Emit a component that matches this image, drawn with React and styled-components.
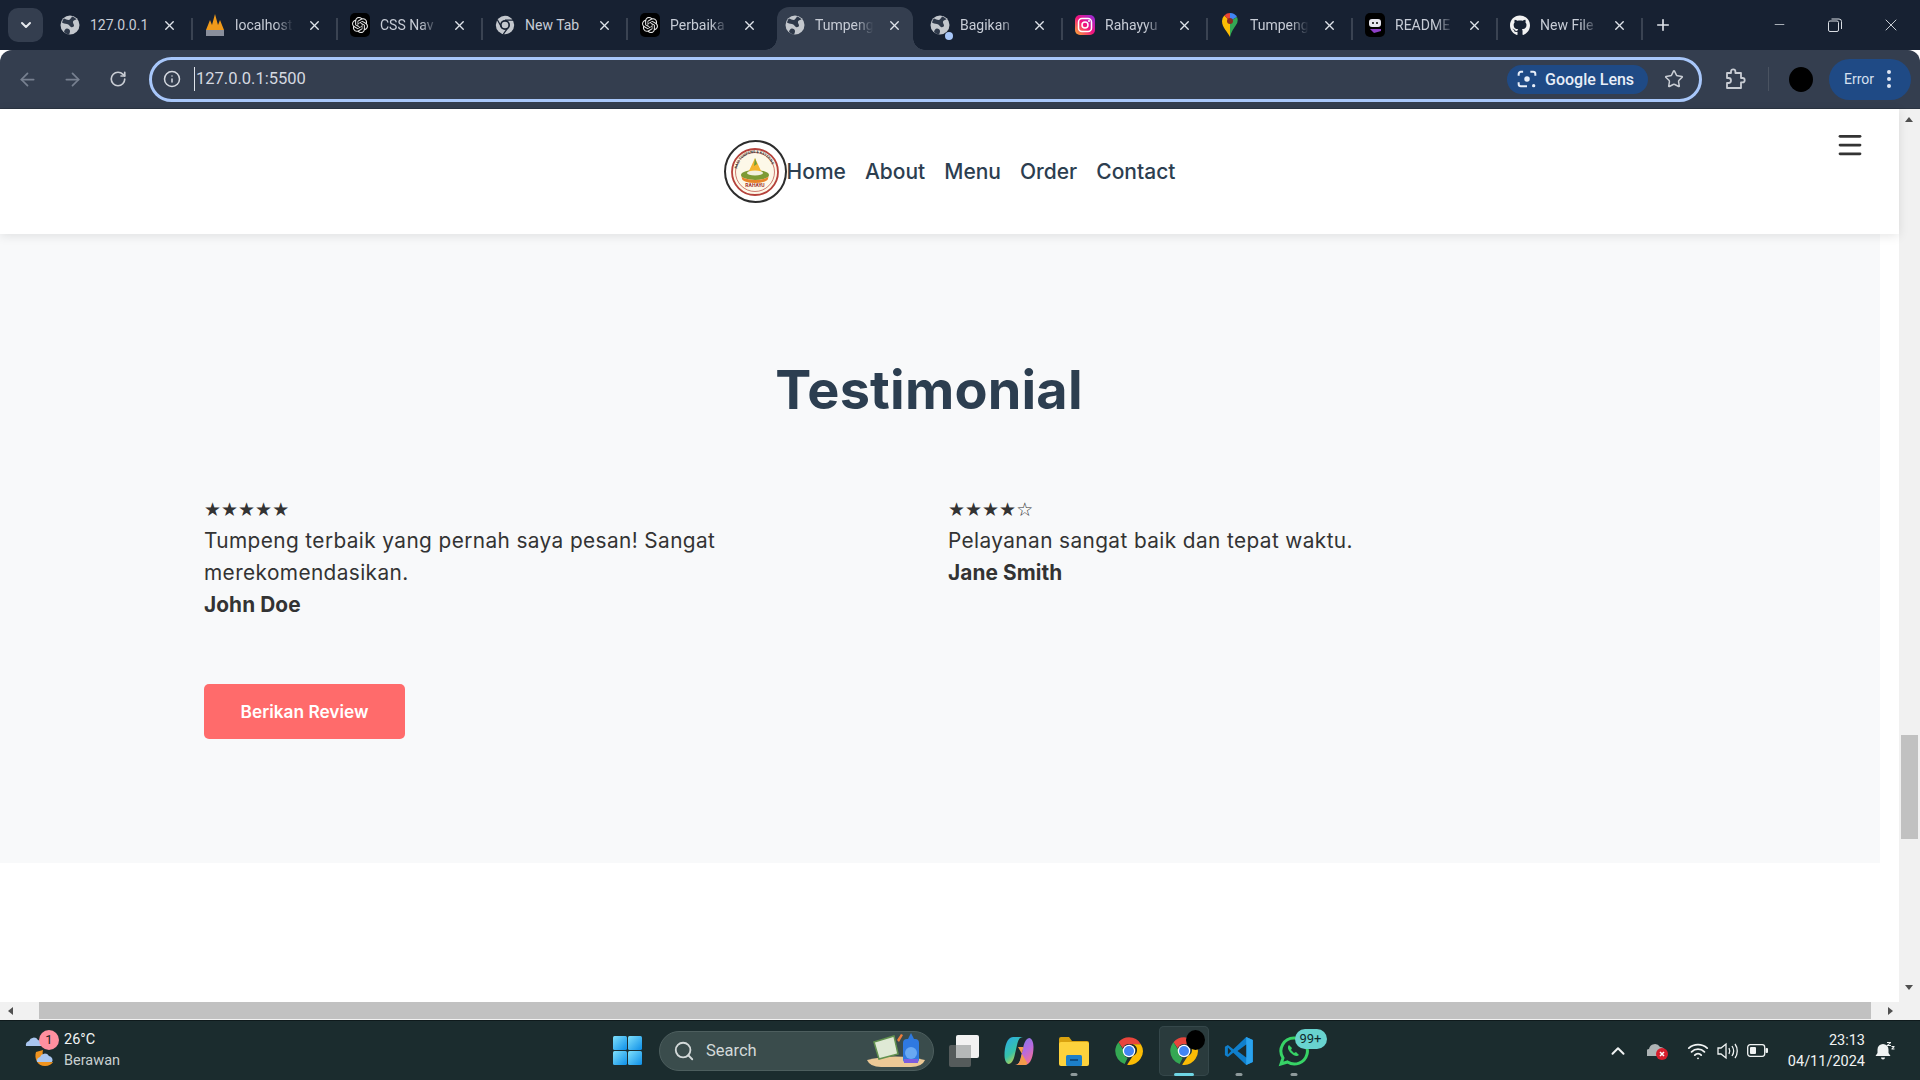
import styled, { createGlobalStyle } from "styled-components"
import { ArrowLeft, ArrowRight, RotateCw, Info, Star, Plus, X, ChevronDown, ChevronUp, Search, Wifi, Minus, Menu } from "lucide-react"
import { FaGithub } from "react-icons/fa"
import { SiOpenai } from "react-icons/si"

const GlobalStyle = createGlobalStyle`
  html, body { margin: 0; padding: 0; overflow: hidden; }
  body { font-family: "Inter", "Liberation Sans", sans-serif; }
  * { box-sizing: border-box; }
`

const Screen = styled.div`
  width: 1920px;
  height: 1080px;
  display: flex;
  flex-direction: column;
  background: #fff;
  overflow: hidden;
`

/* browser tabs */
const TabStrip = styled.div`
  height: 50px;
  background: #172132;
  display: flex;
  align-items: flex-end;
  padding-left: 8px;
  flex-shrink: 0;
`
const TabListButton = styled.div`
  width: 35px;
  height: 34px;
  margin: 0 4px 8px 0;
  border-radius: 10px;
  background: #343e4f;
  color: #e6e9ee;
  display: flex;
  align-items: center;
  justify-content: center;
`
const Tab = styled.div`
  position: relative;
  width: 145px;
  height: 43px;
  padding: 0 0 7px 13px;
  display: flex;
  align-items: center;
  flex-shrink: 0;
`
const ActiveShape = styled.div`
  position: absolute;
  left: 5px;
  right: 4px;
  top: 0;
  bottom: 0;
  background: #343e4f;
  border-radius: 12px 12px 0 0;
`
const Flare = styled.div`
  position: absolute;
  bottom: 0;
  width: 12px;
  height: 12px;
  ${p => (p.$side === "left" ? "left: -7px;" : "right: -8px;")}
  background: radial-gradient(circle at ${p => (p.$side === "left" ? "0 0" : "100% 0")}, transparent 11.5px, #343e4f 12px);
`
const TabIcon = styled.div`
  position: relative;
  width: 20px;
  height: 20px;
  flex-shrink: 0;
  display: flex;
  align-items: center;
  justify-content: center;
`
const TabDot = styled.div`
  position: absolute;
  right: -3px;
  bottom: -5px;
  width: 8px;
  height: 8px;
  border-radius: 50%;
  background: #a8c7fa;
`
const TabTitle = styled.div`
  position: relative;
  width: 65px;
  margin-left: 10px;
  font-family: "Roboto", sans-serif;
  font-size: 14px;
  color: #c7ccd6;
  white-space: nowrap;
  ${p => p.$fade && `
    -webkit-mask-image: linear-gradient(to right, #000 62%, transparent 90%);
    mask-image: linear-gradient(to right, #000 62%, transparent 90%);
  `}
`
const TabClose = styled.div`
  position: relative;
  margin-left: 7px;
  color: #dfe3ea;
  display: flex;
`
const TabSep = styled.div`
  position: absolute;
  right: -1px;
  top: 11px;
  width: 2px;
  height: 22px;
  background: #3a4352;
`
const NewTab = styled.div`
  width: 30px;
  margin: 0 0 7px 12px;
  height: 36px;
  color: #dfe3ea;
  display: flex;
  align-items: center;
`
const WindowControls = styled.div`
  margin-left: auto;
  height: 50px;
  display: flex;
  align-items: center;
  color: #d9dde3;
`
const WindowButton = styled.div`
  width: ${p => p.$w || 55}px;
  display: flex;
  justify-content: center;
  margin-bottom: 1px;
`

/* address bar */
const Toolbar = styled.div`
  height: 59px;
  background: #343e4f;
  border-radius: 12px 12px 0 0;
  display: flex;
  align-items: center;
  padding: 0 8px 0 0;
  flex-shrink: 0;
  border-bottom: 1px solid #2b3442;
`
const NavIcon = styled.div`
  width: 45px;
  display: flex;
  justify-content: center;
  color: ${p => (p.$dim ? "#778090" : "#c9cdd4")};
  &:first-child { margin-left: 5px; }
`
const AddressBar = styled.div`
  width: 1553px;
  height: 45px;
  margin-left: 9px;
  border: 3px solid #a8c7fa;
  border-radius: 23px;
  display: flex;
  align-items: center;
  padding-left: 11px;
  color: #d5d9e0;
`
const UrlText = styled.div`
  margin-left: 13px;
  padding-left: 1px;
  border-left: 1px solid #dfe3ea;
  font-family: "Roboto", sans-serif;
  font-size: 16.5px;
  line-height: 24px;
  color: #d5d9e0;
`
const LensPill = styled.div`
  margin-left: auto;
  width: 141px;
  height: 29px;
  border-radius: 15px;
  background: #1f4a85;
  display: flex;
  align-items: center;
  padding-left: 10px;
  gap: 8px;
  font-family: "Roboto", sans-serif;
  font-weight: 500;
  font-size: 16px;
  color: #e8eef8;
`
const StarButton = styled.div`
  width: 52px;
  margin-right: -1px;
  display: flex;
  justify-content: center;
  color: #c9cdd4;
`
const ExtensionButton = styled.div`
  margin-left: 20px;
  width: 26px;
  display: flex;
  justify-content: center;
  color: #c9cdd4;
`
const ToolbarDivider = styled.div`
  width: 1px;
  height: 24px;
  margin-left: 20px;
  background: #4a5361;
`
const Avatar = styled.div`
  width: 24px;
  height: 25px;
  margin-left: 20px;
  border-radius: 50%;
  background: #000;
`
const ErrorPill = styled.div`
  width: 82px;
  height: 41px;
  margin-left: 16px;
  border-radius: 21px;
  background: #1f4a85;
  display: flex;
  align-items: center;
  padding-left: 15px;
  font-family: "Roboto", sans-serif;
  font-size: 14px;
  color: #d6e0f0;
`
const Kebab = styled.div`
  margin-left: 13px;
  display: flex;
  flex-direction: column;
  gap: 3px;
  & > i {
    display: block;
    width: 4px;
    height: 4px;
    border-radius: 50%;
    background: #dfe6f2;
  }
`

/* page area */
const Viewport = styled.div`
  flex: 1;
  min-height: 0;
  display: flex;
`
const Page = styled.div`
  flex: 1;
  min-width: 0;
  background: #fff;
`
const NavBar = styled.nav`
  position: relative;
  z-index: 1;
  height: 125px;
  background: #fff;
  box-shadow: 0 2px 10px rgba(0, 0, 0, 0.1);
  display: flex;
  align-items: center;
  justify-content: center;
`
const LogoRing = styled.div`
  width: 63px;
  height: 63px;
  border-radius: 50%;
  border: 2px solid #2d2d2d;
  display: flex;
  align-items: center;
  justify-content: center;
`
const NavLinks = styled.div`
  display: flex;
  gap: 19px;
`
const NavLink = styled.a`
  font-size: 21px;
  font-weight: 500;
  color: #2c3e50;
`
const Hamburger = styled.div`
  position: absolute;
  right: 34px;
  top: 21px;
  color: #333;
  display: flex;
`
const Section = styled.section`
  width: 1880px;
  height: 629px;
  background: #f8f9fa;
  padding: 116px 0 0 204px;
`
const Container = styled.div`
  width: 1450px;
`
const Title = styled.h2`
  margin: 0;
  text-align: center;
  font-size: 54px;
  line-height: 80px;
  font-weight: 700;
  letter-spacing: 0.2px;
  color: #2c3e50;
`
const ReviewGrid = styled.div`
  margin-top: 63px;
  display: grid;
  grid-template-columns: 706px 706px;
  gap: 38px;
`
const Review = styled.div`
  font-size: 20.8px;
  line-height: 32px;
  color: #333;
`
const Stars = styled.div`
  font-family: "DejaVu Sans", sans-serif;
  font-size: 19px;
  line-height: 32px;
  height: 32px;
`
const Quote = styled.p`
  margin: 0;
  max-width: 560px;
  letter-spacing: 0.4px;
`
const Author = styled.div`
  font-weight: 700;
  letter-spacing: 0.1px;
`
const ReviewButton = styled.button`
  display: block;
  margin-top: 63px;
  width: 201px;
  height: 55px;
  border: none;
  border-radius: 5px;
  background: #ff6b6b;
  color: #fff;
  font-family: inherit;
  font-size: 17.3px;
  font-weight: 600;
`

/* scrollbars */
const VScroll = styled.div`
  position: relative;
  width: 21px;
  background: #f1f1f1;
  flex-shrink: 0;
`
const VThumb = styled.div`
  position: absolute;
  top: 626px;
  left: 2px;
  width: 17px;
  height: 104px;
  background: #c1c1c1;
`
const Arrow = styled.div`
  position: absolute;
  width: 0;
  height: 0;
  border-style: solid;
  ${p => p.$dir === "up" && "top: 8px; left: 6px; border-width: 0 4.5px 5px; border-color: transparent transparent #505050;"}
  ${p => p.$dir === "down" && "bottom: 12px; left: 6px; border-width: 5px 4.5px 0; border-color: #505050 transparent transparent;"}
  ${p => p.$dir === "left" && "left: 8px; top: 5px; border-width: 4.5px 5px 4.5px 0; border-color: transparent #505050 transparent transparent;"}
  ${p => p.$dir === "right" && "right: 27px; top: 5px; border-width: 4.5px 0 4.5px 5px; border-color: transparent transparent transparent #505050;"}
`
const HScroll = styled.div`
  position: relative;
  height: 18px;
  background: #f1f1f1;
  flex-shrink: 0;
`
const HThumb = styled.div`
  position: absolute;
  left: 39px;
  top: 0;
  width: 1832px;
  height: 17px;
  background: #c1c1c1;
`

/* taskbar */
const Taskbar = styled.div`
  position: relative;
  height: 60px;
  background: #1b2c2e;
  flex-shrink: 0;
  display: flex;
  align-items: center;
  border-top: 1px solid #0f1a1c;
`
const Weather = styled.div`
  position: absolute;
  left: 24px;
  top: 7px;
  display: flex;
  gap: 7px;
`
const WeatherIcon = styled.div`
  position: relative;
  width: 33px;
  height: 44px;
`
const WeatherBadge = styled.div`
  position: absolute;
  left: 15px;
  top: 2px;
  width: 20px;
  height: 20px;
  border-radius: 50%;
  background: #ff8f9f;
  color: #222;
  font-family: "Roboto", sans-serif;
  font-size: 13px;
  line-height: 20px;
  text-align: center;
`
const WeatherText = styled.div`
  font-family: "Roboto", sans-serif;
  font-size: 14.5px;
  line-height: 21px;
  color: #f2f4f4;
  padding-top: 1px;
  & > div + div { color: #c9d0d0; }
`
const TaskCenter = styled.div`
  position: absolute;
  left: 613px;
  top: 0;
  height: 59px;
  display: flex;
  align-items: center;
`
const SearchPill = styled.div`
  position: relative;
  width: 275px;
  height: 40px;
  margin: 0 2px 0 17px;
  border-radius: 20px;
  background: #3a4c4c;
  border: 1px solid #4d5e5e;
  display: flex;
  align-items: center;
  padding-left: 13px;
  gap: 11px;
  font-family: "Roboto", sans-serif;
  font-size: 16.5px;
  color: #d3d9d9;
`
const SearchArt = styled.div`
  position: absolute;
  right: 6px;
  bottom: 2px;
  display: flex;
`
const TaskItem = styled.div`
  position: relative;
  width: 50px;
  height: 50px;
  margin: 0 2.5px;
  border-radius: 5px;
  display: flex;
  align-items: center;
  justify-content: center;
  ${p => p.$active && "background: #2a3b3d; box-shadow: inset 0 0 0 1px #35474a;"}
`
const RunDot = styled.div`
  position: absolute;
  bottom: 0;
  left: 50%;
  transform: translateX(-50%);
  height: 3px;
  border-radius: 2px;
  width: ${p => (p.$active ? "20px" : "7px")};
  background: ${p => (p.$active ? "#6fd6e4" : "#8e9a9b")};
`
const CountBadge = styled.div`
  position: absolute;
  right: -8px;
  top: 3px;
  width: 32px;
  height: 20px;
  border-radius: 10px;
  background: #68d3cf;
  color: #10282a;
  font-family: "Roboto", sans-serif;
  font-size: 13px;
  line-height: 20px;
  text-align: center;
`
const BlackSpot = styled.div`
  position: absolute;
  right: 4px;
  top: 4px;
  width: 19px;
  height: 20px;
  border-radius: 50%;
  background: #000;
`
const Tray = styled.div`
  position: absolute;
  right: 15px;
  top: 0;
  height: 59px;
  display: flex;
  align-items: center;
  color: #f0f3f3;
`
const TrayIcon = styled.div`
  width: ${p => p.$w || 30}px;
  display: flex;
  justify-content: center;
`
const Clock = styled.div`
  margin-left: 15px;
  text-align: right;
  font-family: "Roboto", sans-serif;
  font-size: 14.5px;
  line-height: 21px;
  color: #f0f3f3;
`

const Globe = ({ size = 20 }) => (
  <svg width={size} height={size} viewBox="0 0 20 20">
    <circle cx="10" cy="10" r="9.5" fill="#c3c7cd" />
    <path d="M4 3.5c2 .5 3 1.5 4.5 1.5S11 3 12 1.5c2 .5 3.5 1.5 4.5 3-1.5.5-3 .8-3.5 2s1 2.500 1 4-2 2-3 1.500-2-2.500-4-3-4-.5-5-1.500C2.500 6 3 4.500 4 3.500zM7 13.500c1.500 0 3 1 3 2.500s-.5 3-1.500 3.500C6.500 19 5 18 4 16.500c.5-1.500 1.500-3 3-3z" fill="#2e3849" />
  </svg>
)
const PeakIcon = () => (
  <svg width="20" height="24" viewBox="0 0 20 24">
    <path d="M1 17 5 7l2 5 3-11 3 11 2-5 4 10z" fill="#f09a1a" />
    <rect x="1" y="17" width="18" height="6" fill="#8a8f9c" />
  </svg>
)
const DarkTile = ({ children }) => (
  <svg width="20" height="24" viewBox="0 0 20 24">
    <rect width="20" height="24" rx="5" fill="#000" />
    {children}
  </svg>
)
const OpenAiIcon = () => (
  <div style={{ position: "relative", width: 20, height: 24 }}>
    <DarkTile />
    <SiOpenai size={16} color="#e8e8e8" style={{ position: "absolute", left: 2, top: 4 }} />
  </div>
)
const ChromeIcon = ({ size = 20 }) => (
  <svg width={size} height={size} viewBox="0 0 24 24">
    <path d="M12 1a11 11 0 0 1 9.500 5.500H12a5.500 5.500 0 0 0-5 3.200L3.600 4.900A11 11 0 0 1 12 1z" fill="#e8453c" />
    <path d="M1 12a11 11 0 0 1 2.600-7.100L8 12a4 4 0 0 0 3 5.400L8.500 22.400A11 11 0 0 1 1 12z" fill="#34a853" />
    <path d="M21.500 6.500A11 11 0 0 1 10.500 23l4.500-7a5 5 0 0 0 0-9.500z" fill="#fbbc05" />
    <circle cx="12" cy="12" r="5" fill="#fff" />
    <circle cx="12" cy="12" r="4" fill="#4285f4" />
  </svg>
)
const MonoChrome = () => (
  <svg width="20" height="20" viewBox="0 0 24 24">
    <circle cx="12" cy="12" r="11" fill="#c3c7cd" />
    <circle cx="12" cy="12" r="6" fill="#172132" />
    <circle cx="12" cy="12" r="4" fill="#c3c7cd" />
    <path d="M12 6h10M8 15 3 6M15 16l-5 7" stroke="#172132" strokeWidth="1.500" />
  </svg>
)
const InstagramIcon = () => (
  <svg width="20" height="24" viewBox="0 0 20 24">
    <defs>
      <linearGradient id="igGrad" x1="0" y1="1" x2="1" y2="0">
        <stop offset="0" stopColor="#fdb130" />
        <stop offset=".5" stopColor="#f0127e" />
        <stop offset="1" stopColor="#8d2fe0" />
      </linearGradient>
    </defs>
    <rect y="2" width="20" height="20" rx="5" fill="url(#igGrad)" />
    <rect x="3.500" y="5.500" width="13" height="13" rx="3.500" fill="none" stroke="#fff" strokeWidth="1.500" />
    <circle cx="10" cy="12" r="3" fill="none" stroke="#fff" strokeWidth="1.500" />
    <circle cx="14" cy="8" r="1" fill="#fff" />
  </svg>
)
const MapsIcon = () => (
  <svg width="16" height="24" viewBox="0 0 16 24">
    <path d="M8 24C6 19 0 15 0 8a8 8 0 0 1 2.300-5.600L8 8z" fill="#fbbc05" />
    <path d="M2.300 2.400A8 8 0 0 1 8 0v8z" fill="#ea4335" />
    <path d="M8 0a8 8 0 0 1 7 4l-7 4z" fill="#4285f4" />
    <path d="M15 4a8 8 0 0 1-1 8c-2 3-5 7-6 12V8z" fill="#34a853" />
    <circle cx="8" cy="8" r="3" fill="#8d2c20" />
  </svg>
)
const ReadmeIcon = () => (
  <DarkTile>
    <rect x="4" y="6" width="12" height="8" rx="3" fill="#e6e6ee" />
    <circle cx="8" cy="10" r="1" fill="#000" />
    <circle cx="12" cy="10" r="1" fill="#000" />
    <path d="M5 16h11v2l-7 2z" fill="#8e3fc9" />
  </DarkTile>
)
const LensIcon = () => (
  <svg width="20" height="20" viewBox="0 0 18 18" fill="none" stroke="#e8eef8" strokeWidth="1.800">
    <path d="M1.500 6V4.500a2 2 0 0 1 2-2h2M12 2.500h2.500a2 2 0 0 1 2 2V6M1.500 12v1.500a2 2 0 0 0 2 2H9" />
    <circle cx="9" cy="9" r="2.500" fill="#e8eef8" stroke="none" />
    <circle cx="15" cy="15" r="1.500" fill="#e8eef8" stroke="none" />
  </svg>
)
const PuzzleIcon = () => (
  <svg width="22" height="22" viewBox="0 0 22 22" fill="none" stroke="currentColor" strokeWidth="1.800" strokeLinejoin="round">
    <path d="M3 5h4V3.500a2.200 2.200 0 0 1 4.400 0V5H17v5h1.500a2.200 2.200 0 0 1 0 4.400H17V20H3v-5h1.500a2.500 2.500 0 0 0 0-5H3z" />
  </svg>
)
const RestoreIcon = () => (
  <svg width="14" height="14" viewBox="0 0 14 14" fill="none" stroke="currentColor" strokeWidth="1">
    <rect x=".5" y="3" width="10" height="10.500" rx="1.500" />
    <path d="M3.500 1h7.500a2.500 2.500 0 0 1 2.500 2.500V11" />
  </svg>
)
const BrandLogo = () => (
  <svg width="50" height="50" viewBox="0 0 50 50">
    <circle cx="25" cy="25" r="24" fill="#fdf8e8" />
    <circle cx="25" cy="25" r="23" fill="none" stroke="#b5413c" strokeWidth="1.800" />
    <circle cx="25" cy="25" r="19.500" fill="none" stroke="#c05a50" strokeWidth=".8" />
    <path id="logoArc" d="M7 24a18 18 0 0 1 36 0" fill="none" />
    <text fontFamily="Roboto" fontSize="3.600" fontWeight="700" fill="#333">
      <textPath href="#logoArc" startOffset="4%">NASI TUMPENG &amp; KATERING</textPath>
    </text>
    <ellipse cx="25" cy="28" rx="14" ry="5" fill="#7d9a35" />
    <path d="M25 11l7 15H18z" fill="#f4b52e" />
    <path d="M25 11l2 6-3 2z" fill="#6ea03a" />
    <ellipse cx="25" cy="26" rx="8" ry="2.500" fill="#f3f0df" />
    <path d="M11 28a14 5 0 0 0 28 0l-1 3.500a13 4.500 0 0 1-26 0z" fill="#e8842a" />
    <text x="25" y="40" textAnchor="middle" fontFamily="Roboto" fontSize="5" fontWeight="700" fill="#a12e2a">RAHAYU</text>
  </svg>
)
const WeatherArt = () => (
  <svg width="33" height="44" viewBox="0 0 33 44">
    <path d="M12 24c-2 6 1 14 9 14 4 0 7-2 8-4-6 1-12-4-10-12z" fill="#f0941f" />
    <path d="M2 18a4 4 0 0 1 3-5 5 5 0 0 1 9-1 4 4 0 0 1 3 6z" fill="#a9c6ef" />
    <path d="M13 34a4 4 0 0 1 3-5 5 5 0 0 1 9-1 4 4 0 0 1 3 6z" fill="#a9c6ef" />
  </svg>
)
const WindowsLogo = () => (
  <svg width="29" height="29" viewBox="0 0 29 29">
    <defs>
      <linearGradient id="winGrad" x1="0" y1="0" x2="1" y2="1">
        <stop offset="0" stopColor="#7fe0fb" />
        <stop offset="1" stopColor="#0d8fe8" />
      </linearGradient>
    </defs>
    <rect width="14" height="14" rx="1.500" fill="url(#winGrad)" />
    <rect x="15" width="14" height="14" rx="1.500" fill="url(#winGrad)" />
    <rect y="15" width="14" height="14" rx="1.500" fill="url(#winGrad)" />
    <rect x="15" y="15" width="14" height="14" rx="1.500" fill="url(#winGrad)" />
  </svg>
)
const SearchScene = () => (
  <svg width="60" height="36" viewBox="0 0 60 36">
    <path d="M0 28q28-7 58 0q-3 7-14 7H14Q3 35 0 28z" fill="#ecc996" />
    <path d="M7 10l20-6 4 18-19 5z" fill="#dfe9d5" stroke="#62914f" strokeWidth="1.500" />
    <path d="M30 8l4-6 2 1-4 7z" fill="#ef7d3c" />
    <rect x="36" y="7" width="16" height="24" rx="4" fill="#2f79e0" />
    <path d="M41 7l3-6 3 6z" fill="#2f79e0" />
    <circle cx="44" cy="21" r="6" fill="#69a9f2" />
    <rect x="37" y="27" width="14" height="4" fill="#7b5ee0" />
  </svg>
)
const CopyTile = () => (
  <svg width="30" height="32" viewBox="0 0 30 32">
    <rect y="10" width="22" height="22" rx="2" fill="#555b5b" />
    <rect x="7" width="23" height="23" rx="2" fill="#f2f2f2" />
    <rect x="7" y="10" width="15" height="13" fill="#b5b8b8" />
  </svg>
)
const CopilotIcon = () => (
  <svg width="30" height="30" viewBox="0 0 30 30">
    <defs>
      <linearGradient id="coA" x1="0" y1="0" x2="0.6" y2="1">
        <stop offset="0" stopColor="#2aa9ea" />
        <stop offset=".6" stopColor="#37c3a8" />
        <stop offset="1" stopColor="#d8d33c" />
      </linearGradient>
      <linearGradient id="coB" x1="0" y1="0" x2="0.6" y2="1">
        <stop offset="0" stopColor="#6a7fe8" />
        <stop offset=".6" stopColor="#b66ae0" />
        <stop offset="1" stopColor="#f0709a" />
      </linearGradient>
    </defs>
    <path d="M9 1h10c-3 0-4.500 2-5.500 6l-3 13c-1 4-3 8-6 8-3-1-4-5-4-9C.5 11 3 1 9 1z" fill="url(#coA)" />
    <path d="M21 29H11c3 0 4.500-2 5.500-6l3-13c1-4 3-8 6-8 3 1 4 5 4 9 0 8-2.500 18-8.500 18z" fill="url(#coB)" />
    <path d="M14 11h5.500l-3 12c-1 4-2.500 6-5.500 6h9c1.500 0 2.500-.5 3.500-1.500L14 11z" fill="#f39a4a" />
  </svg>
)
const FolderIcon = () => (
  <svg width="30" height="30" viewBox="0 0 30 30">
    <path d="M0 3a2 2 0 0 1 2-2h8l3 4h15a2 2 0 0 1 2 2v4H0z" fill="#d9a20f" />
    <rect y="6" width="30" height="24" rx="2" fill="#fdd23c" />
    <rect x="7" y="19" width="16" height="11" rx="1.500" fill="#1c7fc9" />
    <rect x="11" y="23" width="8" height="2" fill="#0e4f86" />
  </svg>
)
const VsCodeIcon = () => (
  <svg width="30" height="30" viewBox="0 0 100 100">
    <path d="M74 3 96 13v74L74 97 31 56 13 70 3 64V36l10-6 18 14z" fill="#0f7fcc" />
    <path d="M74 3 96 13v74L74 97z" fill="#2aa3ee" />
    <path d="M74 28 45 50l29 22z" fill="#1b2c2e" />
    <path d="M13 38v24l11-12z" fill="#1b2c2e" />
  </svg>
)
const WhatsAppIcon = () => (
  <svg width="32" height="32" viewBox="0 0 32 32">
    <path d="M16 3a13 13 0 0 0-11 20L3 29l6.500-2A13 13 0 1 0 16 3z" fill="none" stroke="#37d366" strokeWidth="3" />
    <path d="M11 10c-2 2-1 5 2 8s6 4 8 2l-3-3-2 1-3-3 1-2z" fill="#37d366" />
  </svg>
)
const CloudErrorIcon = () => (
  <svg width="22" height="18" viewBox="0 0 22 18">
    <path d="M0 14a4 4 0 0 1 2-7 6 6 0 0 1 11-2 5 5 0 0 1 3 9z" fill="#aeb4b5" />
    <circle cx="15" cy="12" r="6" fill="#d81e2c" />
    <path d="M13 10l4 4m0-4-4 4" stroke="#fff" strokeWidth="1.500" />
  </svg>
)
const VolumeIcon = () => (
  <svg width="22" height="18" viewBox="0 0 22 18" fill="none" stroke="#f0f3f3" strokeWidth="1.300">
    <path d="M1 6h3l5-4v14l-5-4H1z" />
    <path d="M12 6c1 2 1 4 0 6M15 4c2 3 2 7 0 10M18 2c3 4 3 10 0 14" />
  </svg>
)
const BatteryIcon = () => (
  <svg width="21" height="13" viewBox="0 0 21 13">
    <rect x=".7" y=".7" width="17" height="11.600" rx="2.500" fill="none" stroke="#f0f3f3" strokeWidth="1.300" />
    <rect x="3" y="3" width="6" height="7" rx="1" fill="#f0f3f3" />
    <rect x="18.500" y="4" width="2.500" height="5" rx="1" fill="#f0f3f3" />
  </svg>
)
const BellIcon = () => (
  <svg width="20" height="20" viewBox="0 0 20 20" fill="#f0f3f3">
    <path d="M8 3a5.500 5.500 0 0 1 5.500 5.500V12l2 3H.5l2-3V8.500A5.500 5.500 0 0 1 8 3z" />
    <path d="M6 16.500h4a2 2 0 0 1-4 0z" />
    <path d="M12 1h4v1l-2.500 2H16v1h-4V4l2.500-2H12zM16.500 5h3v1l-1.500 1.500H19.500v1h-3v-1L18 6h-1.500z" />
  </svg>
)

const tabs = [
  { title: "127.0.0.1", icon: <Globe />, sep: true },
  { title: "localhost", icon: <PeakIcon />, sep: true, fade: true },
  { title: "CSS Nav", icon: <OpenAiIcon />, sep: true, fade: true },
  { title: "New Tab", icon: <MonoChrome />, sep: true },
  { title: "Perbaika", icon: <OpenAiIcon />, fade: true },
  { title: "Tumpeng", icon: <Globe />, active: true, fade: true },
  { title: "Bagikan", icon: <Globe />, dot: true, sep: true, fade: true },
  { title: "Rahayyu", icon: <InstagramIcon />, sep: true, fade: true },
  { title: "Tumpeng", icon: <MapsIcon />, sep: true, fade: true },
  { title: "README", icon: <ReadmeIcon />, sep: true, fade: true },
  { title: "New File", icon: <FaGithub size={21} color="#f2f2f2" />, sep: true, fade: true },
]

const links = ["Home", "About", "Menu", "Order", "Contact"]

const reviews = [
  { stars: "★★★★★", text: "Tumpeng terbaik yang pernah saya pesan! Sangat merekomendasikan.", name: "John Doe" },
  { stars: "★★★★☆", text: "Pelayanan sangat baik dan tepat waktu.", name: "Jane Smith" },
]

function App() {
  return (
    <Screen>
      <GlobalStyle />
      <TabStrip>
        <TabListButton><ChevronDown size={16} strokeWidth={3} /></TabListButton>
        {tabs.map((tab, i) => (
          <Tab key={i}>
            {tab.active && (
              <>
                <ActiveShape />
                <Flare $side="left" />
                <Flare $side="right" />
              </>
            )}
            <TabIcon>
              {tab.icon}
              {tab.dot && <TabDot />}
            </TabIcon>
            <TabTitle $fade={tab.fade}>{tab.title}</TabTitle>
            <TabClose><X size={15} strokeWidth={2.2} /></TabClose>
            {tab.sep && <TabSep />}
          </Tab>
        ))}
        <NewTab><Plus size={18} strokeWidth={2.2} /></NewTab>
        <WindowControls>
          <WindowButton><Minus size={15} strokeWidth={1.2} /></WindowButton>
          <WindowButton><RestoreIcon /></WindowButton>
          <WindowButton $w={58}><X size={20} strokeWidth={1.1} /></WindowButton>
        </WindowControls>
      </TabStrip>

      <Toolbar>
        <NavIcon $dim><ArrowLeft size={21} /></NavIcon>
        <NavIcon $dim><ArrowRight size={21} /></NavIcon>
        <NavIcon><RotateCw size={18} strokeWidth={2.2} /></NavIcon>
        <AddressBar>
          <Info size={18} />
          <UrlText>127.0.0.1:5500</UrlText>
          <LensPill><LensIcon />Google Lens</LensPill>
          <StarButton><Star size={20} strokeWidth={1.8} /></StarButton>
        </AddressBar>
        <ExtensionButton><PuzzleIcon /></ExtensionButton>
        <ToolbarDivider />
        <Avatar />
        <ErrorPill>
          Error
          <Kebab><i /><i /><i /></Kebab>
        </ErrorPill>
      </Toolbar>

      <Viewport>
        <Page>
          <NavBar>
            <LogoRing><BrandLogo /></LogoRing>
            <NavLinks>
              {links.map(link => <NavLink key={link}>{link}</NavLink>)}
            </NavLinks>
            <Hamburger><Menu size={30} strokeWidth={2.2} /></Hamburger>
          </NavBar>
          <Section>
            <Container>
              <Title>Testimonial</Title>
              <ReviewGrid>
                {reviews.map(review => (
                  <Review key={review.name}>
                    <Stars>{review.stars}</Stars>
                    <Quote>{review.text}</Quote>
                    <Author>{review.name}</Author>
                  </Review>
                ))}
              </ReviewGrid>
              <ReviewButton>Berikan Review</ReviewButton>
            </Container>
          </Section>
        </Page>
        <VScroll>
          <Arrow $dir="up" />
          <VThumb />
          <Arrow $dir="down" />
        </VScroll>
      </Viewport>
      <HScroll>
        <Arrow $dir="left" />
        <HThumb />
        <Arrow $dir="right" />
      </HScroll>

      <Taskbar>
        <Weather>
          <WeatherIcon>
            <WeatherArt />
            <WeatherBadge>1</WeatherBadge>
          </WeatherIcon>
          <WeatherText>
            <div>26°C</div>
            <div>Berawan</div>
          </WeatherText>
        </Weather>
        <TaskCenter>
          <WindowsLogo />
          <SearchPill>
            <Search size={22} strokeWidth={2} />
            Search
            <SearchArt><SearchScene /></SearchArt>
          </SearchPill>
          <TaskItem><CopyTile /></TaskItem>
          <TaskItem><CopilotIcon /></TaskItem>
          <TaskItem><FolderIcon /><RunDot /></TaskItem>
          <TaskItem><ChromeIcon size={30} /></TaskItem>
          <TaskItem $active><ChromeIcon size={30} /><BlackSpot /><RunDot $active /></TaskItem>
          <TaskItem><VsCodeIcon /><RunDot /></TaskItem>
          <TaskItem><WhatsAppIcon /><CountBadge>99+</CountBadge><RunDot /></TaskItem>
        </TaskCenter>
        <Tray>
          <TrayIcon><ChevronUp size={22} strokeWidth={2.2} /></TrayIcon>
          <TrayIcon $w={50}><CloudErrorIcon /></TrayIcon>
          <TrayIcon><Wifi size={22} strokeWidth={2} /></TrayIcon>
          <TrayIcon><VolumeIcon /></TrayIcon>
          <TrayIcon><BatteryIcon /></TrayIcon>
          <Clock>
            <div>23:13</div>
            <div>04/11/2024</div>
          </Clock>
          <TrayIcon $w={40}><BellIcon /></TrayIcon>
        </Tray>
      </Taskbar>
    </Screen>
  )
}

export default App
